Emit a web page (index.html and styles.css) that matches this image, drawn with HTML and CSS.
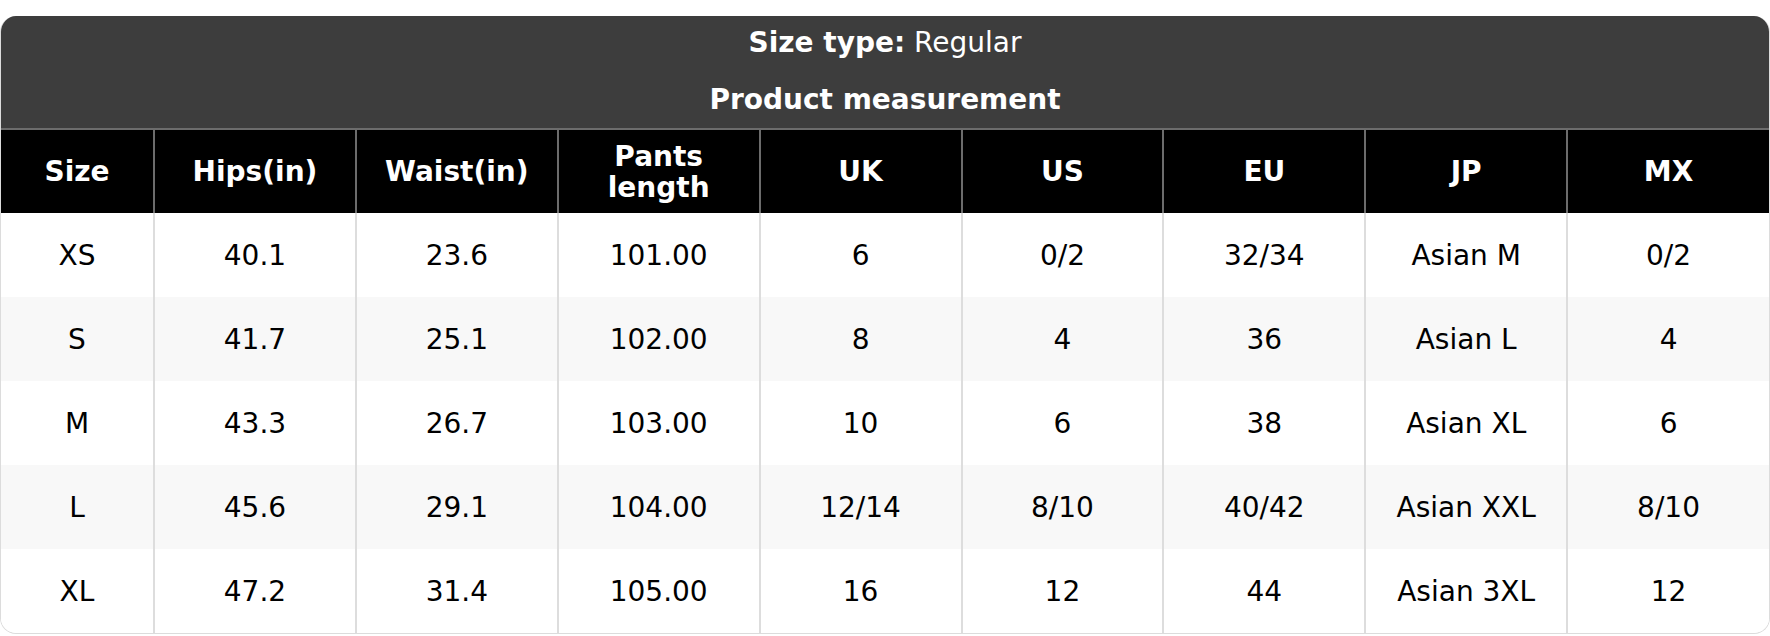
FILE: index.html
```html
<!DOCTYPE html>
<html lang="en">
<head>
<meta charset="utf-8">
<title>Size chart</title>
<link rel="stylesheet" href="styles.css">
</head>
<body>
<div class="card">
  <div class="title">
    <div class="title-line"><strong>Size type:</strong> Regular</div>
    <div class="title-line"><strong>Product measurement</strong></div>
  </div>
  <table class="chart">
    <colgroup>
      <col class="col-first">
      <col><col><col><col><col><col><col><col>
    </colgroup>
    <thead>
      <tr>
        <th>Size</th><th>Hips(in)</th><th>Waist(in)</th><th>Pants<br>length</th><th>UK</th><th>US</th><th>EU</th><th>JP</th><th>MX</th>
      </tr>
    </thead>
    <tbody>
      <tr><td>XS</td><td>40.1</td><td>23.6</td><td>101.00</td><td>6</td><td>0/2</td><td>32/34</td><td>Asian M</td><td>0/2</td></tr>
      <tr><td>S</td><td>41.7</td><td>25.1</td><td>102.00</td><td>8</td><td>4</td><td>36</td><td>Asian L</td><td>4</td></tr>
      <tr><td>M</td><td>43.3</td><td>26.7</td><td>103.00</td><td>10</td><td>6</td><td>38</td><td>Asian XL</td><td>6</td></tr>
      <tr><td>L</td><td>45.6</td><td>29.1</td><td>104.00</td><td>12/14</td><td>8/10</td><td>40/42</td><td>Asian XXL</td><td>8/10</td></tr>
      <tr><td>XL</td><td>47.2</td><td>31.4</td><td>105.00</td><td>16</td><td>12</td><td>44</td><td>Asian 3XL</td><td>12</td></tr>
    </tbody>
  </table>
</div>
</body>
</html>
```

FILE: styles.css
```css
html, body {
  margin: 0;
  padding: 0;
  background: #ffffff;
}
body {
  padding-top: 16px;
  font-family: "DejaVu Sans", Verdana, sans-serif;
  font-size: 28px;
  color: #000000;
}
.card {
  width: 1770px;
  box-sizing: border-box;
  border: 1px solid #dcdcdc;
  border-top: none;
  border-radius: 16px;
  overflow: hidden;
}
.title {
  background: #3d3d3d;
  color: #ffffff;
  text-align: center;
  height: 112px;
  display: flex;
  flex-direction: column;
}
.title-line {
  height: 56px;
  line-height: 56px;
}
.title-line:first-child {
  line-height: 54px;
}
.title strong {
  font-weight: bold;
}
.chart {
  width: 100%;
  border-collapse: collapse;
  table-layout: fixed;
}
.col-first {
  width: 153px;
}
.chart th {
  background: #000000;
  color: #ffffff;
  font-weight: bold;
  line-height: 31px;
  height: 83px;
  padding: 0 8px;
  border-top: 2px solid #6c6c6c;
  border-left: 2px solid #6c6c6c;
  text-align: center;
  vertical-align: middle;
}
.chart td {
  height: 84px;
  padding: 0 8px;
  line-height: 31px;
  text-align: center;
  vertical-align: middle;
  border-left: 2px solid #dddddd;
}
.chart th:first-child,
.chart td:first-child {
  border-left: none;
}
.chart tbody tr:nth-child(even) td {
  background: #f8f8f8;
}
.chart tbody tr:nth-child(odd) td {
  background: #ffffff;
}
```
